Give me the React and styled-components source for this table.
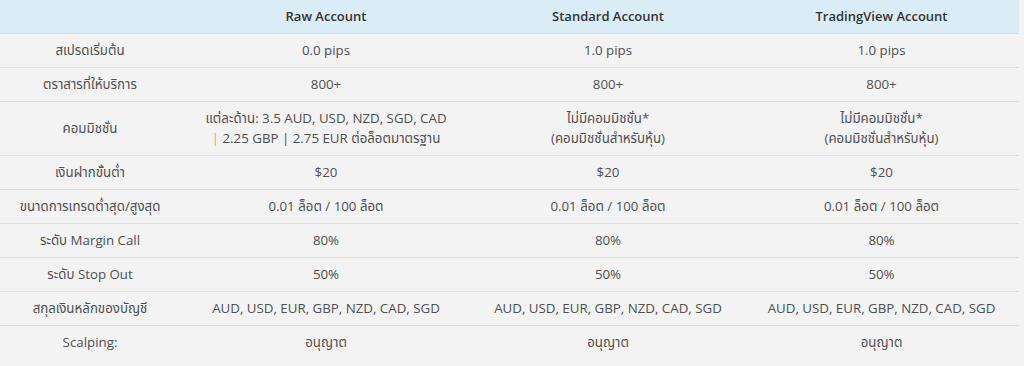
import React from "react";
import styled, { createGlobalStyle } from "styled-components";

const Global = createGlobalStyle`
  html, body { margin: 0; padding: 0; background: #f3f3f3; }
  body { font-family: "Open Sans", "Noto Sans", "Noto Sans Thai", sans-serif; }
`;

const Page = styled.div`
  width: 1024px;
  height: 366px;
  background: #f3f3f3;
  overflow: hidden;
`;

const Table = styled.table`
  width: 1019px;
  border-collapse: collapse;
  table-layout: fixed;
  font-size: 13.3px;
  line-height: 20px;
  color: #505050;
`;

const HeadRow = styled.tr`
  background: #daedf6;
`;

const Th = styled.th`
  height: 33px;
  padding: 0 8px;
  box-sizing: border-box;
  font-size: 13px;
  font-weight: 600;
  color: #333;
  text-align: center;
  border-bottom: 1px solid #dcdcdc;
`;

const Row = styled.tr`
  border-bottom: ${(p) => (p.$last ? "none" : "1px solid #dedede")};
`;

const Td = styled.td`
  height: ${(p) => (p.$tall ? "54px" : "34px")};
  padding: 0 8px;
  box-sizing: border-box;
  text-align: center;
  vertical-align: middle;
  font-weight: 400;
`;

const Accent = styled.span`
  color: #f0a033;
`;

const cols = ["180px", "292px", "272px", "275px"];

const noComm = (
  <>
    ไม่มีคอมมิชชั่น*
    <br />
    (คอมมิชชั่นสำหรับหุ้น)
  </>
);

const rows = [
  ["สเปรดเริ่มต้น", "0.0 pips", "1.0 pips", "1.0 pips"],
  ["ตราสารที่ให้บริการ", "800+", "800+", "800+"],
  [
    "คอมมิชชั่น",
    <>
      แต่ละด้าน: 3.5 AUD, USD, NZD, SGD, CAD
      <br />
      <Accent>|</Accent> 2.25 GBP | 2.75 EUR ต่อล็อตมาตรฐาน
    </>,
    noComm,
    noComm,
  ],
  ["เงินฝากขั้นต่ำ", "$20", "$20", "$20"],
  ["ขนาดการเทรดต่ำสุด/สูงสุด", "0.01 ล็อต / 100 ล็อต", "0.01 ล็อต / 100 ล็อต", "0.01 ล็อต / 100 ล็อต"],
  ["ระดับ Margin Call", "80%", "80%", "80%"],
  ["ระดับ Stop Out", "50%", "50%", "50%"],
  [
    "สกุลเงินหลักของบัญชี",
    "AUD, USD, EUR, GBP, NZD, CAD, SGD",
    "AUD, USD, EUR, GBP, NZD, CAD, SGD",
    "AUD, USD, EUR, GBP, NZD, CAD, SGD",
  ],
  ["Scalping:", "อนุญาต", "อนุญาต", "อนุญาต"],
];

export default function App() {
  return (
    <Page>
      <Global />
      <Table>
        <colgroup>
          {cols.map((w, i) => (
            <col key={i} style={{ width: w }} />
          ))}
        </colgroup>
        <thead>
          <HeadRow>
            <Th />
            <Th>Raw Account</Th>
            <Th>Standard Account</Th>
            <Th>TradingView Account</Th>
          </HeadRow>
        </thead>
        <tbody>
          {rows.map((r, i) => (
            <Row key={i} $last={i === rows.length - 1}>
              {r.map((c, j) => (
                <Td key={j} $tall={i === 2}>
                  {c}
                </Td>
              ))}
            </Row>
          ))}
        </tbody>
      </Table>
    </Page>
  );
}
